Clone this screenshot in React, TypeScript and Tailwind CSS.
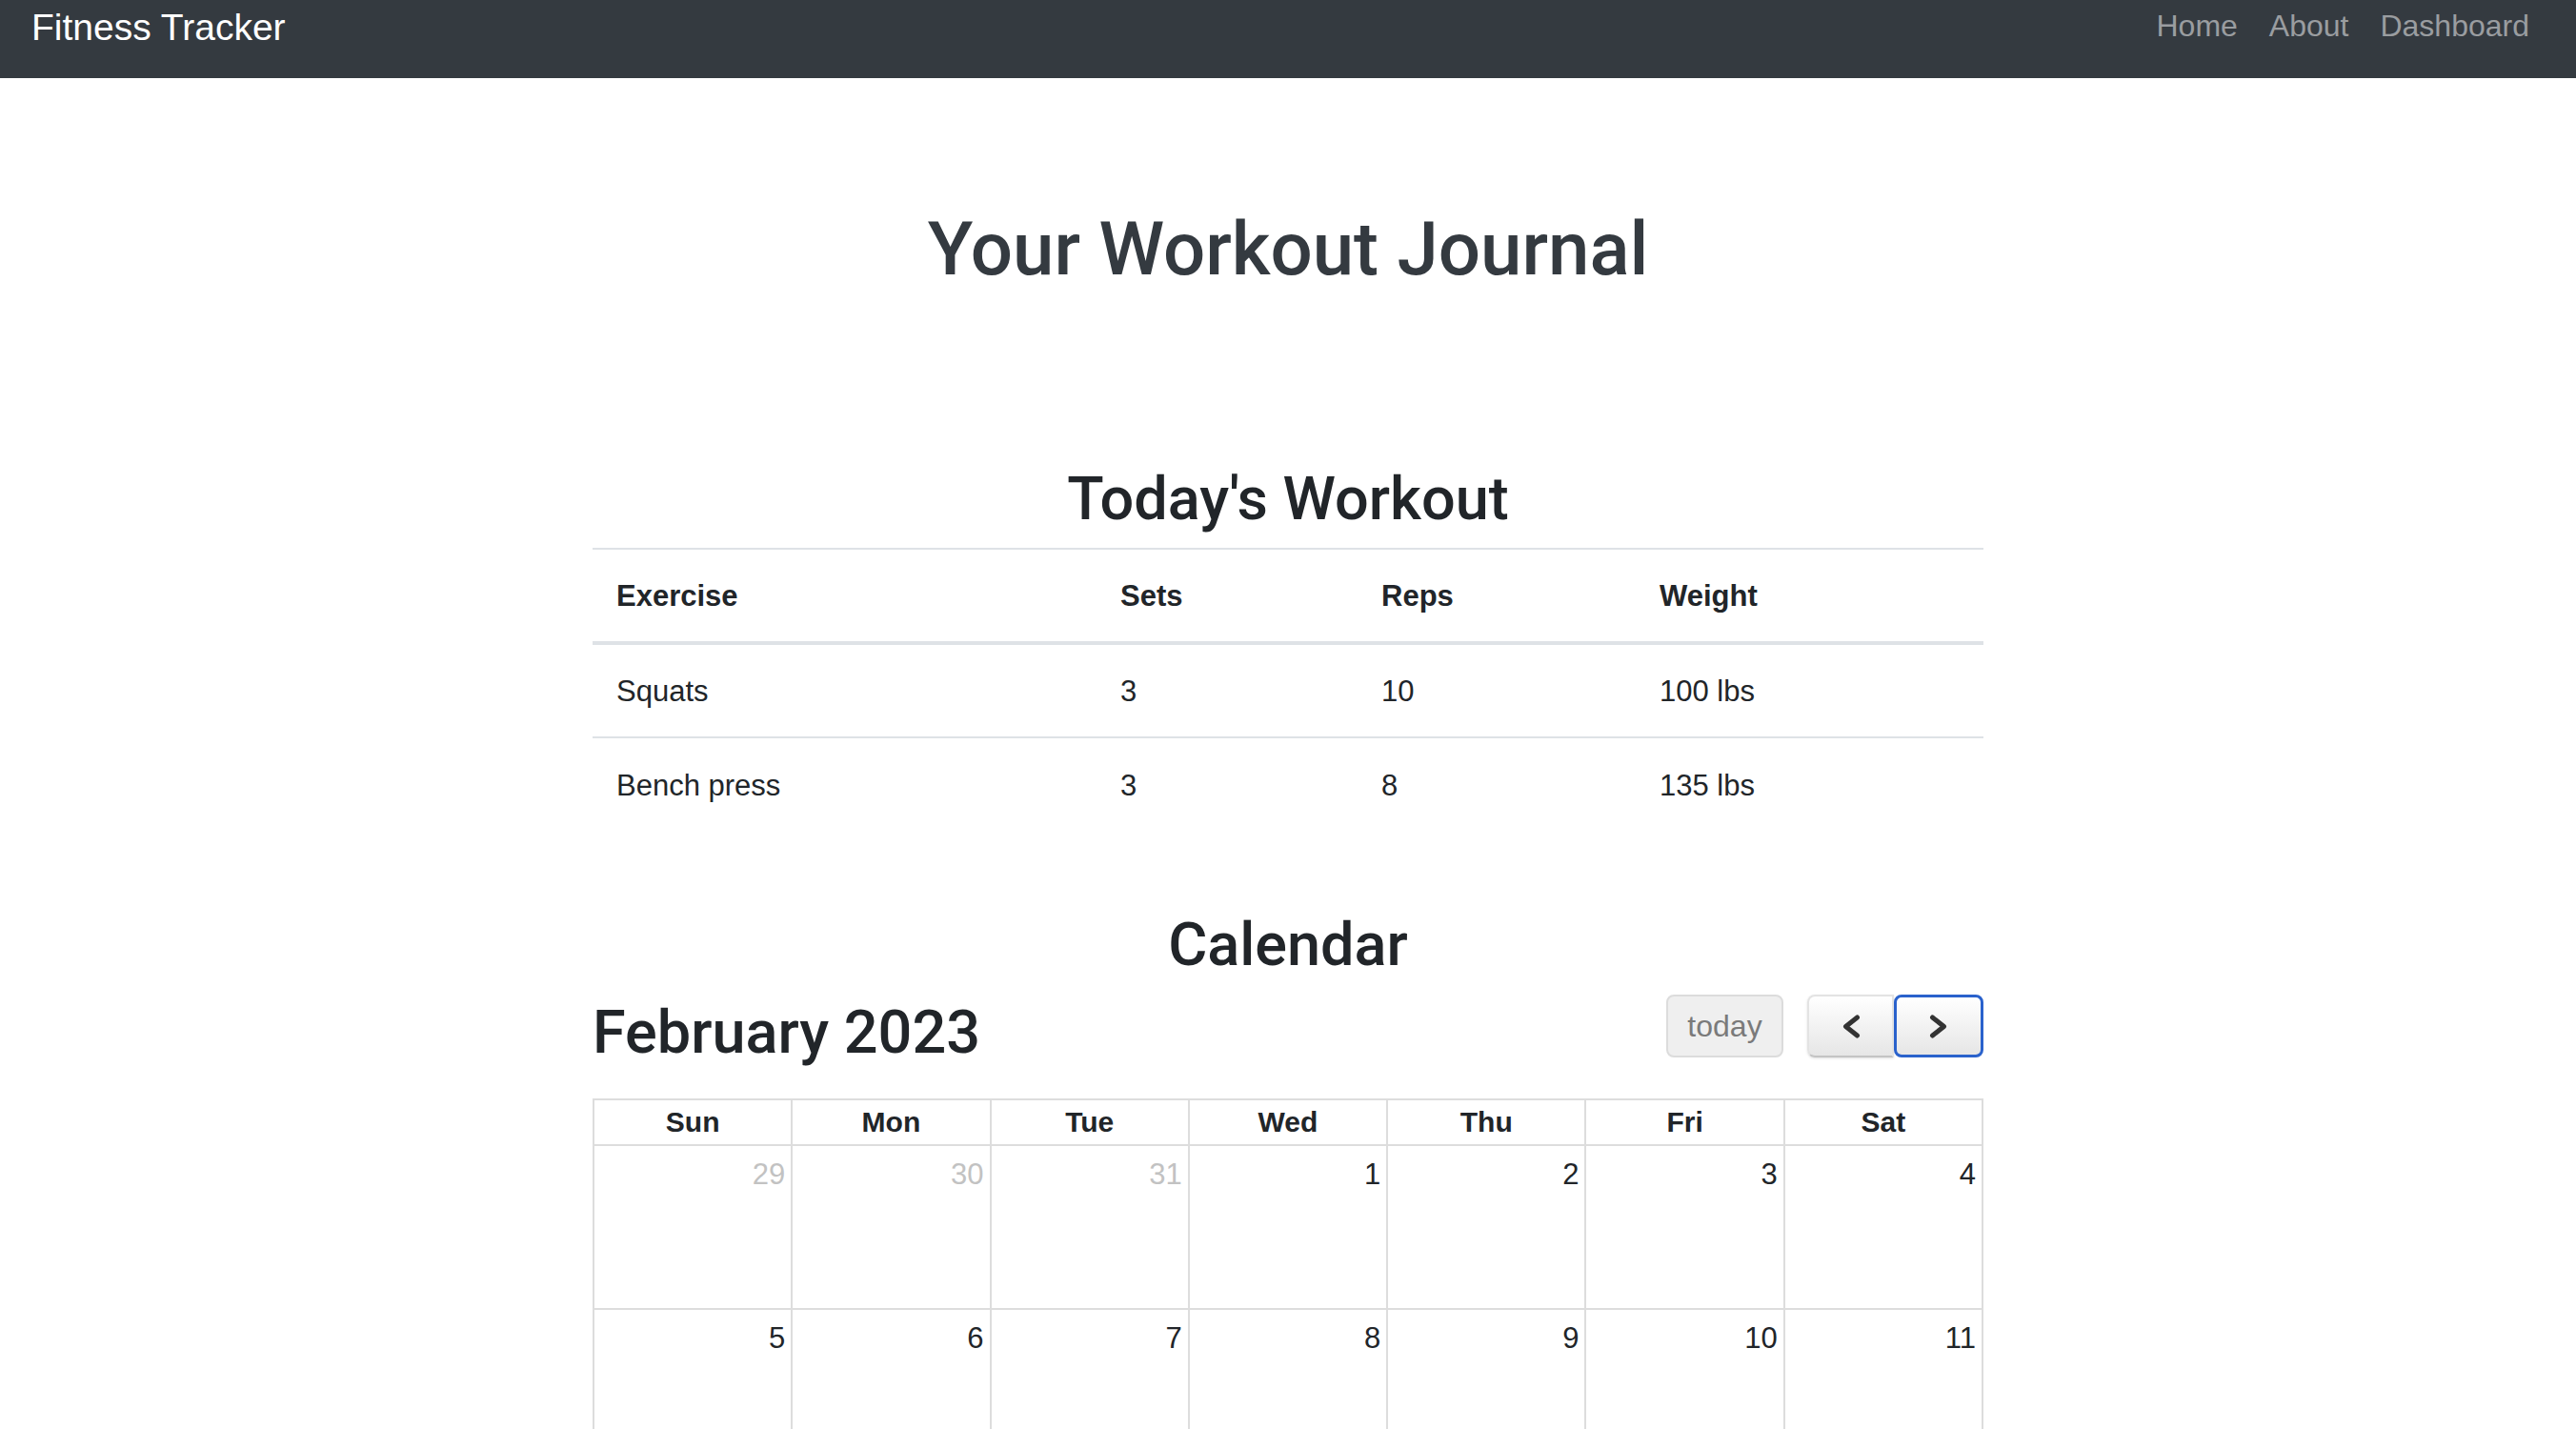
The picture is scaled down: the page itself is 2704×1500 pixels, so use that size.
import React from "react";

const workouts = [
  { exercise: "Squats", sets: 3, reps: 10, weight: "100 lbs" },
  { exercise: "Bench press", sets: 3, reps: 8, weight: "135 lbs" },
];

const weekDays = ["Sun", "Mon", "Tue", "Wed", "Thu", "Fri", "Sat"];

// February 2023, six weeks shown like fullcalendar does
const buildWeeks = () => {
  const cells: { day: number; other: boolean }[] = [];
  [29, 30, 31].forEach((d) => cells.push({ day: d, other: true }));
  for (let d = 1; d <= 28; d++) cells.push({ day: d, other: false });
  let next = 1;
  while (cells.length < 42) cells.push({ day: next++, other: true });
  const weeks = [];
  for (let i = 0; i < 6; i++) weeks.push(cells.slice(i * 7, i * 7 + 7));
  return weeks;
};

const Chevron = ({ dir }: { dir: "left" | "right" }) => (
  <svg width="20" height="25" viewBox="0 0 20 25" fill="none">
    <polyline
      points={dir === "left" ? "16.5,3 4.5,12.5 16.5,22" : "3.5,3 15.5,12.5 3.5,22"}
      stroke="#333333"
      strokeWidth="5"
      strokeLinecap="round"
      strokeLinejoin="round"
    />
  </svg>
);

const heading = "font-['Roboto',Arial,sans-serif] font-medium";

const Navbar = () => (
  <nav className="flex h-[82px] items-start justify-between bg-[#343a40] pl-[33px] pr-[49px]">
    <a className="pt-[9px] text-[39px] leading-[39px] text-white">Fitness Tracker</a>
    <ul className="flex gap-[33px] pt-[11px] text-[32px] leading-[32px] text-[#9a9da0]">
      <li>Home</li>
      <li>About</li>
      <li>Dashboard</li>
    </ul>
  </nav>
);

const WorkoutTable = () => (
  <table className="mt-[20px] w-full table-fixed text-left text-[31px] leading-[31px] text-[#212529]">
    <thead>
      <tr>
        <th className="h-[99px] w-[529px] border-t-2 border-b-4 border-[#dee2e6] pl-[25px] font-bold">Exercise</th>
        <th className="h-[99px] w-[274px] border-t-2 border-b-4 border-[#dee2e6] pl-[25px] font-bold">Sets</th>
        <th className="h-[99px] w-[292px] border-t-2 border-b-4 border-[#dee2e6] pl-[25px] font-bold">Reps</th>
        <th className="h-[99px] border-t-2 border-b-4 border-[#dee2e6] pl-[25px] font-bold">Weight</th>
      </tr>
    </thead>
    <tbody>
      {workouts.map((w, i) => (
        <tr key={w.exercise} className={i > 0 ? "border-t-2 border-[#dee2e6]" : ""}>
          <td className="h-[99px] pl-[25px]">{w.exercise}</td>
          <td className="h-[99px] pl-[25px]">{w.sets}</td>
          <td className="h-[99px] pl-[25px]">{w.reps}</td>
          <td className="h-[99px] pl-[25px]">{w.weight}</td>
        </tr>
      ))}
    </tbody>
  </table>
);

const Calendar = () => {
  const weeks = buildWeeks();
  return (
    <div>
      <div className="mt-[21px] flex items-start justify-between">
        <h2 className={"mt-[8px] text-[63px] leading-[63px] text-[#212529] " + heading}>February 2023</h2>
        <div className="flex">
          <button className="h-[66px] w-[123px] rounded-lg border-2 border-[#dcdcdc] bg-[#efefef] text-[32px] leading-[32px] text-[#7a7a7a]">
            today
          </button>
          <div className="ml-[25px] flex">
            <button className="flex h-[66px] w-[91px] items-center justify-center rounded-l-lg border-2 border-[#e3e3e3] border-b-[#c4c4c4] bg-linear-to-b from-white to-[#e6e6e6] shadow-sm">
              <Chevron dir="left" />
            </button>
            <button className="flex h-[66px] w-[94px] items-center justify-center rounded-lg border-[3px] border-[#2a62cc] bg-linear-to-b from-white to-[#e6e6e6]">
              <Chevron dir="right" />
            </button>
          </div>
        </div>
      </div>

      <div className="mt-[38px] grid grid-cols-7 border-t-2 border-l-2 border-[#dddddd] text-[#212529]">
        {weekDays.map((d) => (
          <div
            key={d}
            className="flex h-[48px] items-center justify-center border-r-2 border-b-2 border-[#dddddd] text-[30px] leading-[30px] font-bold"
          >
            {d}
          </div>
        ))}
        {weeks.flat().map((c, i) => (
          <div
            key={i}
            className={
              "h-[172px] border-r-2 border-b-2 border-[#dddddd] pt-[14px] pr-[6px] text-right text-[31px] leading-[31px] " +
              (c.other ? "text-[#c2c2c2]" : "text-[#212529]")
            }
          >
            {c.day}
          </div>
        ))}
      </div>
    </div>
  );
};

export default function App() {
  return (
    <div className="min-h-screen bg-white font-['Liberation_Sans',Arial,sans-serif]">
      <Navbar />
      <main className="mx-auto w-[1460px] pb-[60px]">
        <h1 className={"mt-[141px] text-center text-[78px] leading-[78px] text-[#343a40] " + heading}>
          Your Workout Journal
        </h1>
        <h2 className={"mt-[191px] text-center text-[63px] leading-[63px] text-[#212529] " + heading}>
          Today's Workout
        </h2>
        <WorkoutTable />
        <h2 className={"mt-[87px] text-center text-[63px] leading-[63px] text-[#212529] " + heading}>Calendar</h2>
        <Calendar />
      </main>
    </div>
  );
}
